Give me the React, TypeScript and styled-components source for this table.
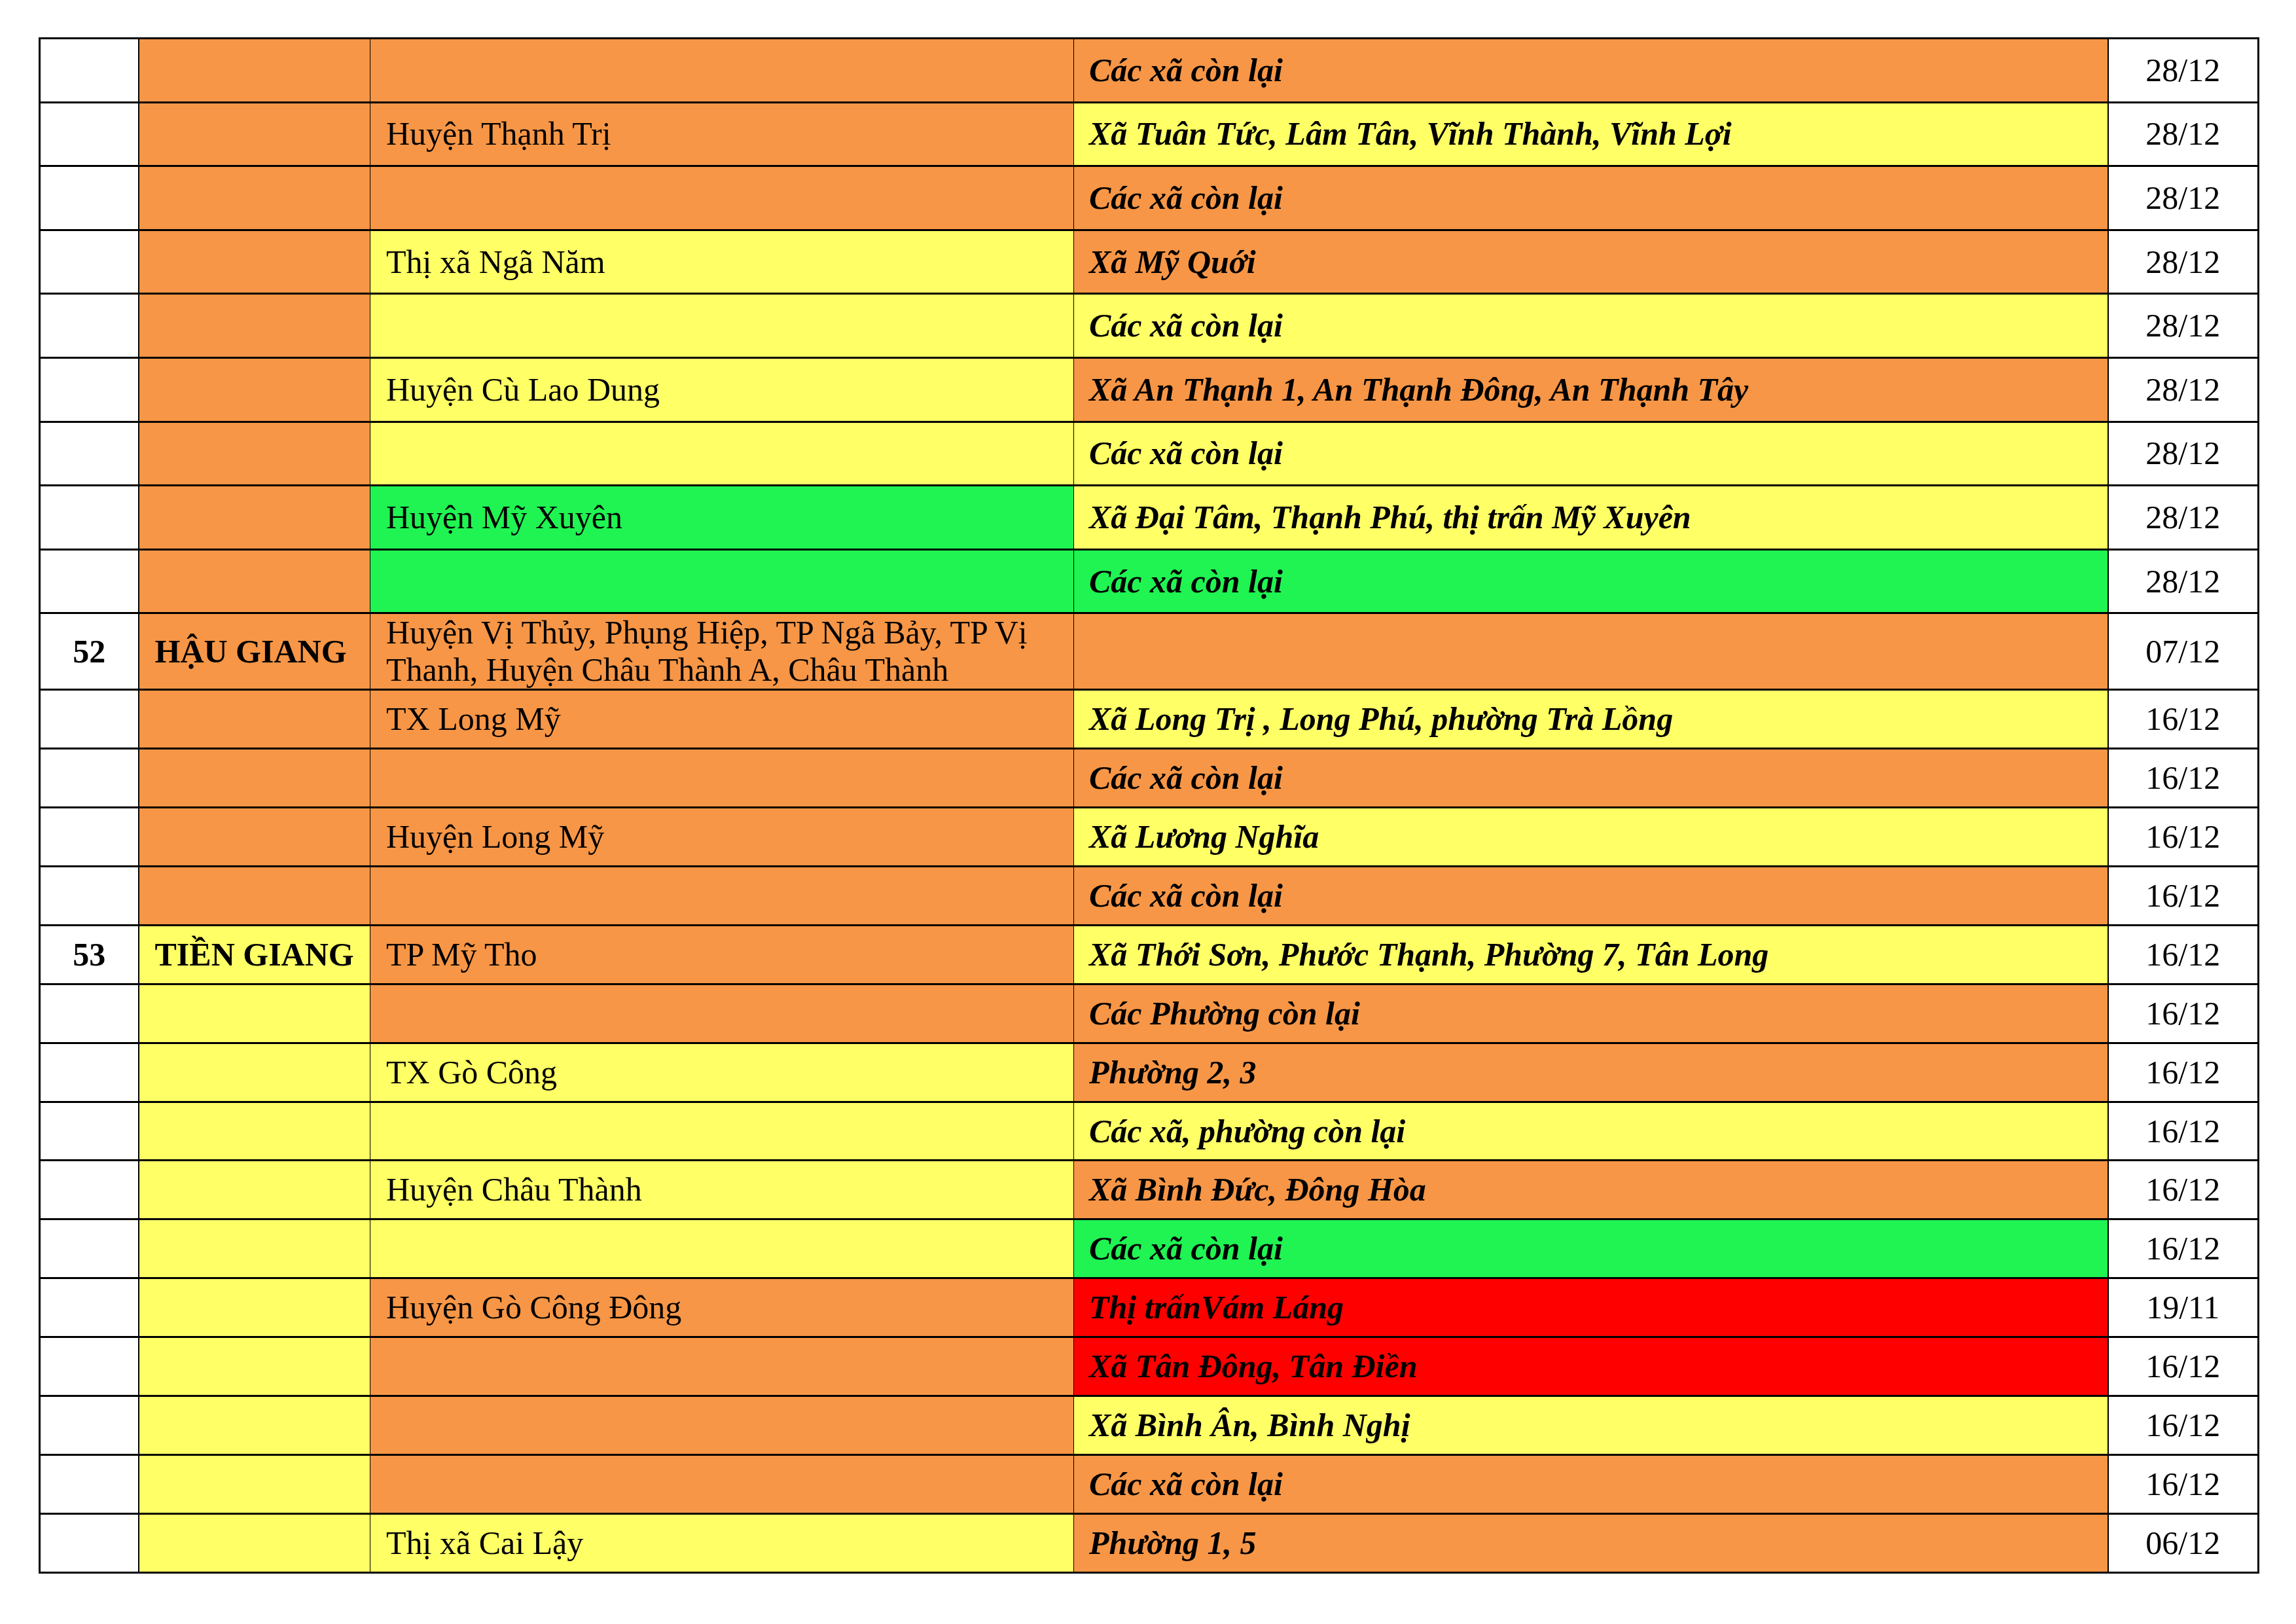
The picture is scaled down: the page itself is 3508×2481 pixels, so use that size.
import React from "react";
import styled, { createGlobalStyle } from "styled-components";

type Fill = "white" | "orange" | "yellow" | "green" | "red";

const fills: Record<Fill, string> = {
  white: "#ffffff",
  orange: "#f79646",
  yellow: "#ffff66",
  green: "#1ff452",
  red: "#ff0000",
};

interface RowData {
  no?: string;
  province?: string;
  district?: React.ReactNode;
  ward?: string;
  date: string;
  c2: Fill;
  c3: Fill;
  c4: Fill;
  h: number;
}

const TOP = 97.6;
const MID = 117;
const LOW = 89.9;

const columns = [151, 354, 1075, 1580, 230];

const rows: RowData[] = [
  { ward: "Các xã còn lại", date: "28/12", c2: "orange", c3: "orange", c4: "orange", h: TOP },
  { district: "Huyện Thạnh Trị", ward: "Xã Tuân Tức, Lâm Tân, Vĩnh Thành, Vĩnh Lợi", date: "28/12", c2: "orange", c3: "orange", c4: "yellow", h: TOP },
  { ward: "Các xã còn lại", date: "28/12", c2: "orange", c3: "orange", c4: "orange", h: TOP },
  { district: "Thị xã Ngã Năm", ward: "Xã Mỹ Quới", date: "28/12", c2: "orange", c3: "yellow", c4: "orange", h: TOP },
  { ward: "Các xã còn lại", date: "28/12", c2: "orange", c3: "yellow", c4: "yellow", h: TOP },
  { district: "Huyện Cù Lao Dung", ward: "Xã An Thạnh 1, An Thạnh Đông, An Thạnh Tây", date: "28/12", c2: "orange", c3: "yellow", c4: "orange", h: TOP },
  { ward: "Các xã còn lại", date: "28/12", c2: "orange", c3: "yellow", c4: "yellow", h: TOP },
  { district: "Huyện Mỹ Xuyên", ward: "Xã Đại Tâm, Thạnh Phú, thị trấn Mỹ Xuyên", date: "28/12", c2: "orange", c3: "green", c4: "yellow", h: TOP },
  { ward: "Các xã còn lại", date: "28/12", c2: "orange", c3: "green", c4: "green", h: TOP },
  {
    no: "52",
    province: "HẬU GIANG",
    district: (
      <>
        Huyện Vị Thủy, Phụng Hiệp, TP Ngã Bảy, TP Vị
        <br />
        Thanh, Huyện Châu Thành A, Châu Thành
      </>
    ),
    date: "07/12",
    c2: "orange",
    c3: "orange",
    c4: "orange",
    h: MID,
  },
  { district: "TX Long Mỹ", ward: "Xã Long Trị , Long Phú, phường Trà Lồng", date: "16/12", c2: "orange", c3: "orange", c4: "yellow", h: LOW },
  { ward: "Các xã còn lại", date: "16/12", c2: "orange", c3: "orange", c4: "orange", h: LOW },
  { district: "Huyện Long Mỹ", ward: "Xã Lương Nghĩa", date: "16/12", c2: "orange", c3: "orange", c4: "yellow", h: LOW },
  { ward: "Các xã còn lại", date: "16/12", c2: "orange", c3: "orange", c4: "orange", h: LOW },
  { no: "53", province: "TIỀN GIANG", district: "TP Mỹ Tho", ward: "Xã Thới Sơn, Phước Thạnh, Phường 7, Tân Long", date: "16/12", c2: "yellow", c3: "orange", c4: "yellow", h: LOW },
  { ward: "Các Phường còn lại", date: "16/12", c2: "yellow", c3: "orange", c4: "orange", h: LOW },
  { district: "TX Gò Công", ward: "Phường 2, 3", date: "16/12", c2: "yellow", c3: "yellow", c4: "orange", h: LOW },
  { ward: "Các xã, phường còn lại", date: "16/12", c2: "yellow", c3: "yellow", c4: "yellow", h: LOW },
  { district: "Huyện Châu Thành", ward: "Xã Bình Đức, Đông Hòa", date: "16/12", c2: "yellow", c3: "yellow", c4: "orange", h: LOW },
  { ward: "Các xã còn lại", date: "16/12", c2: "yellow", c3: "yellow", c4: "green", h: LOW },
  { district: "Huyện Gò Công Đông", ward: "Thị trấnVám Láng", date: "19/11", c2: "yellow", c3: "orange", c4: "red", h: LOW },
  { ward: "Xã Tân Đông, Tân Điền", date: "16/12", c2: "yellow", c3: "orange", c4: "red", h: LOW },
  { ward: "Xã Bình Ân, Bình Nghị", date: "16/12", c2: "yellow", c3: "orange", c4: "yellow", h: LOW },
  { ward: "Các xã còn lại", date: "16/12", c2: "yellow", c3: "orange", c4: "orange", h: LOW },
  { district: "Thị xã Cai Lậy", ward: "Phường 1, 5", date: "06/12", c2: "yellow", c3: "yellow", c4: "orange", h: LOW },
];

const GlobalStyle = createGlobalStyle`
  html, body {
    margin: 0;
    padding: 0;
    background: #ffffff;
  }
`;

const Page = styled.div`
  width: 3508px;
  height: 2481px;
  padding: 57px 0 0 59px;
  box-sizing: border-box;
  background: #ffffff;
`;

const Table = styled.table`
  width: 3390px;
  border-collapse: collapse;
  table-layout: fixed;
  border: 3px solid #000;
  font-family: "Liberation Serif", "Times New Roman", serif;
  font-size: 50px;
  color: #000;
`;

const Col = styled.col<{ $w: number }>`
  width: ${(p) => p.$w}px;
`;

const Row = styled.tr<{ $h: number }>`
  height: ${(p) => p.$h}px;
`;

const Cell = styled.td<{ $fill: Fill }>`
  background: ${(p) => fills[p.$fill]};
  border-top: 3px solid #000;
  border-bottom: 3px solid #000;
  border-left: 1px solid #000;
  border-right: 1px solid #000;
  padding: 0 0 0 24px;
  vertical-align: middle;
  line-height: 57px;
  white-space: nowrap;
`;

const NoCell = styled(Cell)`
  border-right: 2px solid #000;
  padding: 0;
  text-align: center;
  font-weight: bold;
`;

const ProvinceCell = styled(Cell)`
  padding-left: 24px;
  font-weight: bold;
`;

const WardCell = styled(Cell)`
  padding-left: 23px;
  font-weight: bold;
  font-style: italic;
`;

const DateCell = styled(Cell)`
  border-left: 2px solid #000;
  padding: 0;
  text-align: center;
`;

export default function App() {
  return (
    <Page>
      <GlobalStyle />
      <Table>
        <colgroup>
          {columns.map((w, i) => (
            <Col key={i} $w={w} />
          ))}
        </colgroup>
        <tbody>
          {rows.map((r, i) => (
            <Row key={i} $h={r.h}>
              <NoCell $fill="white">{r.no}</NoCell>
              <ProvinceCell $fill={r.c2}>{r.province}</ProvinceCell>
              <Cell $fill={r.c3}>{r.district}</Cell>
              <WardCell $fill={r.c4}>{r.ward}</WardCell>
              <DateCell $fill="white">{r.date}</DateCell>
            </Row>
          ))}
        </tbody>
      </Table>
    </Page>
  );
}
